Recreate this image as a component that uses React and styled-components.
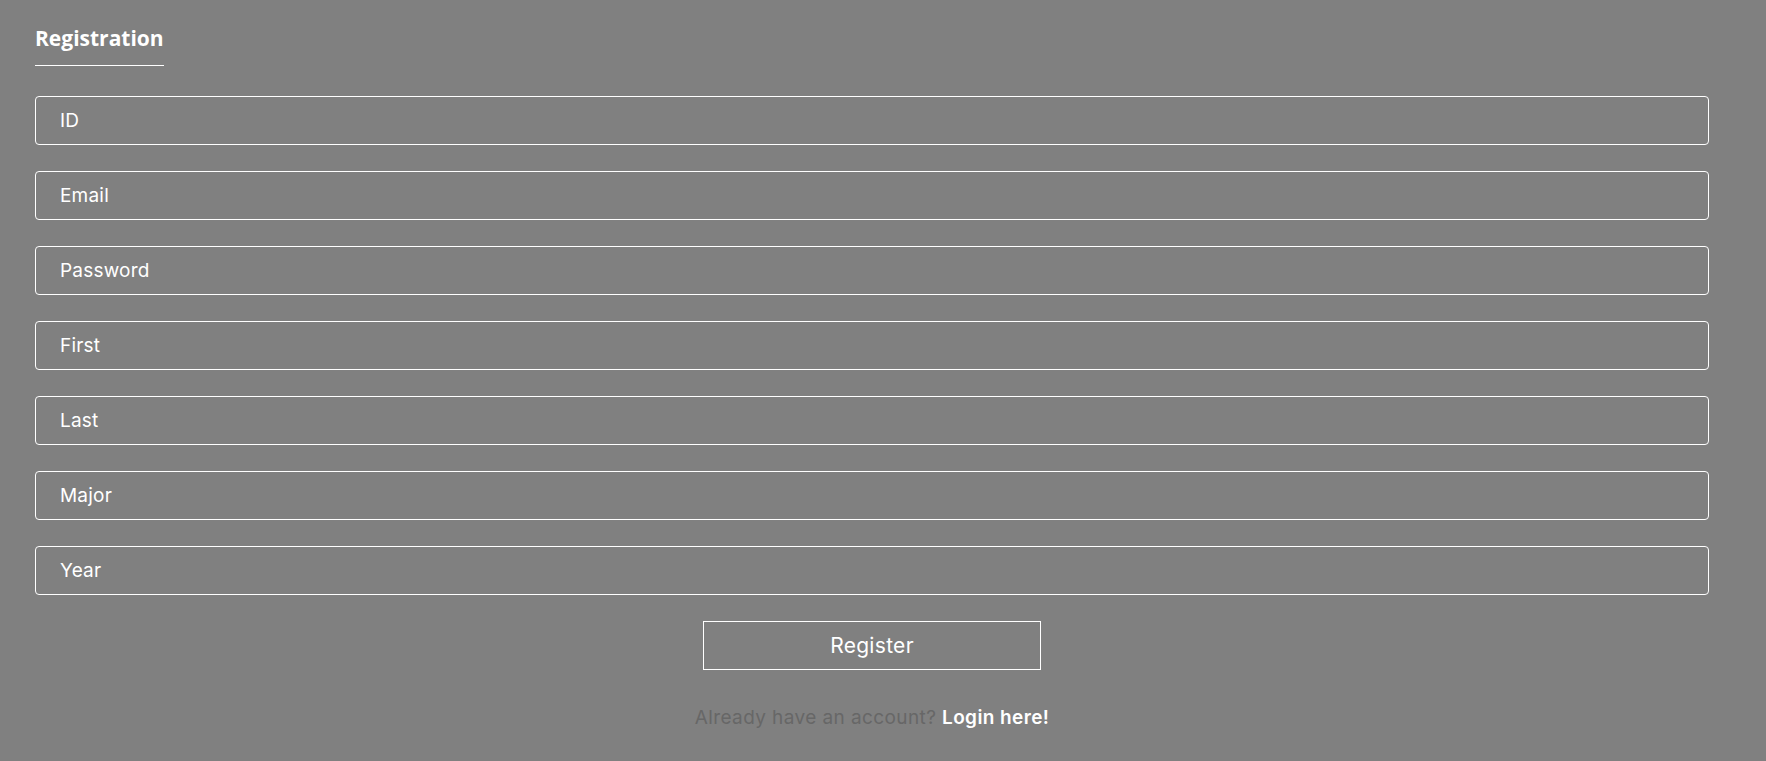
import styled, { createGlobalStyle } from "styled-components";

const fields = ["ID", "Email", "Password", "First", "Last", "Major", "Year"];

export default function App() {
  return (
    <>
      <GlobalStyle />
      <Page>
        <Title>Registration</Title>
        <Form onSubmit={(e) => e.preventDefault()}>
          {fields.map((f) => (
            <Input key={f} placeholder={f} type={f === "Password" ? "password" : "text"} />
          ))}
          <Submit type="submit">Register</Submit>
          <Footer>
            Already have an account? <LoginLink href="#">Login here!</LoginLink>
          </Footer>
        </Form>
      </Page>
    </>
  );
}

const GlobalStyle = createGlobalStyle`
  html, body {
    margin: 0;
    background: #808080;
  }
  * {
    box-sizing: border-box;
  }
`;

const Page = styled.div`
  width: 1674px;
  margin-left: 35px;
  padding-top: 23px;
  display: flex;
  flex-direction: column;
  align-items: flex-start;
`;

const Title = styled.h2`
  margin: 0;
  font-family: "Open Sans", sans-serif;
  font-weight: 700;
  font-size: 21px;
  line-height: 30px;
  color: #fff;
  padding-bottom: 12px;
  border-bottom: 1px solid #fff;
`;

const Form = styled.form`
  width: 100%;
  margin-top: 30px;
  display: flex;
  flex-direction: column;
  align-items: center;
  gap: 26px;
`;

const Input = styled.input`
  width: 100%;
  height: 49px;
  padding: 0 24px;
  background: transparent;
  border: 1px solid #fff;
  border-radius: 4px;
  font-family: Inter, sans-serif;
  font-size: 19px;
  letter-spacing: 0.2px;
  color: #fff;
  outline: none;
  &::placeholder {
    color: #fff;
    opacity: 1;
  }
`;

const Submit = styled.button`
  width: 338px;
  height: 49px;
  background: transparent;
  border: 1px solid #fff;
  font-family: Inter, sans-serif;
  font-size: 21px;
  letter-spacing: 0.3px;
  color: #fff;
  cursor: pointer;
`;

const Footer = styled.p`
  margin: 10px 0 0;
  font-family: Inter, sans-serif;
  font-size: 19px;
  letter-spacing: 0.4px;
  color: #676767;
`;

const LoginLink = styled.a`
  color: #fff;
  font-weight: 600;
  text-decoration: none;
`;
